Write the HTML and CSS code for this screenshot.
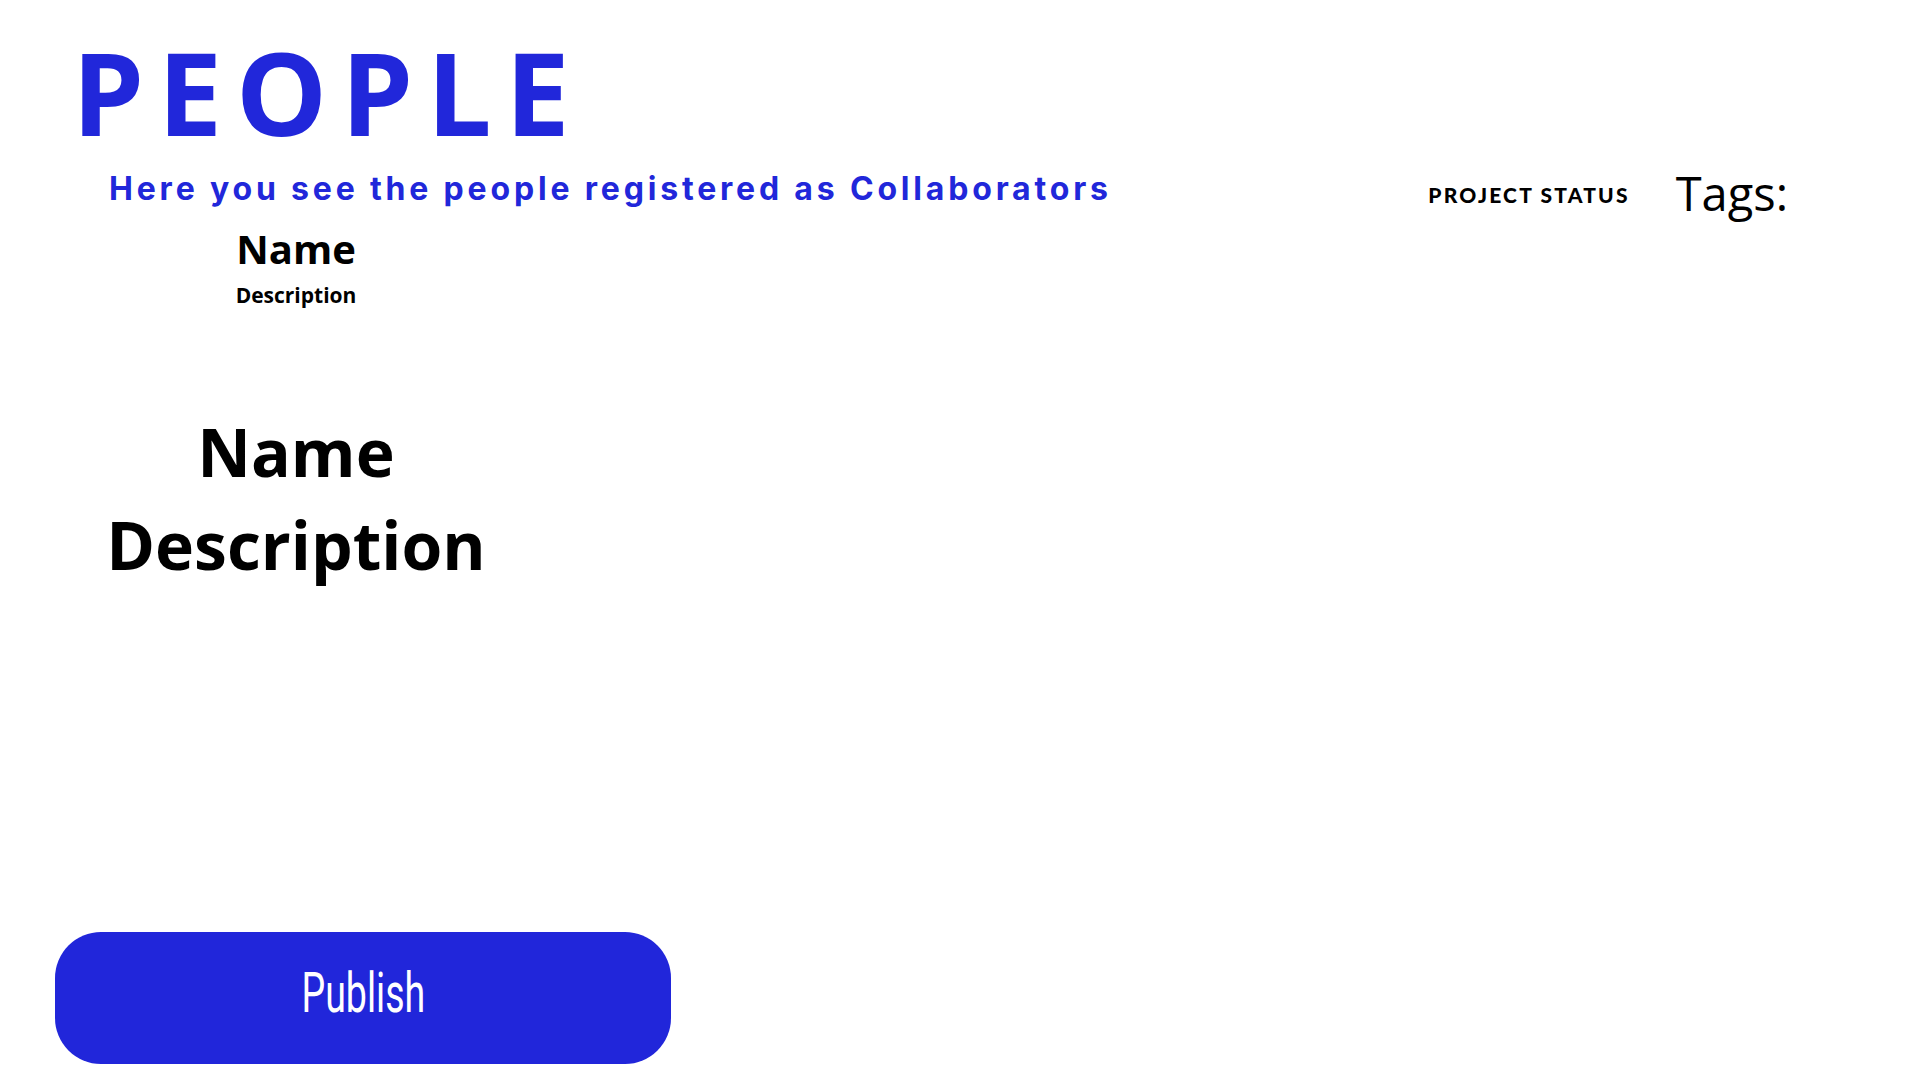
FILE: index.html
```html
<!DOCTYPE html>
<html lang="en">
<head>
<meta charset="utf-8">
<title>People</title>
<link rel="stylesheet" href="styles.css">
</head>
<body>
<main class="page">
  <h1 class="title">PEOPLE</h1>
  <div class="subrow">
    <p class="subtitle">Here you see the people registered as Collaborators</p>
    <div class="meta">
      <span class="status">PROJECT STATUS</span>
      <span class="tags">Tags:</span>
    </div>
  </div>
  <section class="people">
    <div class="person person-small">
      <div class="name">Name</div>
      <div class="desc">Description</div>
    </div>
    <div class="person person-large">
      <div class="name">Name</div>
      <div class="desc">Description</div>
    </div>
  </section>
  <button class="publish" type="button"><span class="publish-label">Publish</span></button>
</main>
</body>
</html>
```

FILE: styles.css
```css
* { box-sizing: border-box; }

html, body {
  margin: 0;
  padding: 0;
  background: #ffffff;
}

.page {
  width: 1920px;
  height: 1080px;
  display: flex;
  flex-direction: column;
  padding: 34px 0 16px 0;
  overflow: hidden;
}

.title {
  margin: 0 0 0 72px;
  font-family: "Open Sans", "Noto Sans", sans-serif;
  font-weight: 700;
  font-size: 115px;
  line-height: 115px;
  letter-spacing: 13.6px;
  color: #2127da;
}

.subrow {
  display: flex;
  align-items: flex-start;
  margin-top: 21px;
  padding-left: 109px;
}

.subtitle {
  margin: 0;
  font-family: "Inter", "Liberation Sans", sans-serif;
  font-weight: 700;
  font-size: 32px;
  line-height: 38px;
  letter-spacing: 3.82px;
  color: #2127da;
  white-space: nowrap;
}

.meta {
  display: flex;
  align-items: flex-start;
  margin-left: auto;
  padding-right: 132px;
  gap: 46px;
}

.status {
  margin-top: 14px;
  font-family: "Lato", "Liberation Sans", sans-serif;
  font-weight: 900;
  font-size: 21px;
  line-height: 21px;
  letter-spacing: 2.2px;
  color: #000;
  white-space: nowrap;
}

.tags {
  font-family: "Open Sans", "Noto Sans", sans-serif;
  font-weight: 400;
  font-size: 47px;
  line-height: 47px;
  color: #000;
}

.people {
  width: 592px;
  display: flex;
  flex-direction: column;
  text-align: center;
  font-family: "Open Sans", "Noto Sans", sans-serif;
  font-weight: 700;
  color: #000;
}

.person-small {
  margin-top: 12px;
}

.person-small .name {
  font-size: 40px;
  line-height: 40px;
}

.person-small .desc {
  margin-top: 16px;
  font-size: 21px;
  line-height: 20px;
}

.person-large {
  margin-top: 100px;
}

.person-large .name,
.person-large .desc {
  font-size: 66px;
  line-height: 93px;
}

.publish {
  margin: auto 0 0 55px;
  width: 616px;
  height: 132px;
  padding: 0 0 10px 0;
  border: none;
  border-radius: 46px;
  background: #2126da;
  color: #ffffff;
  text-align: center;
  cursor: pointer;
}

.publish-label {
  display: inline-block;
  font-family: "Roboto", "Liberation Sans", sans-serif;
  font-weight: 400;
  font-size: 56px;
  line-height: 56px;
  transform: scaleX(0.67);
}
```
